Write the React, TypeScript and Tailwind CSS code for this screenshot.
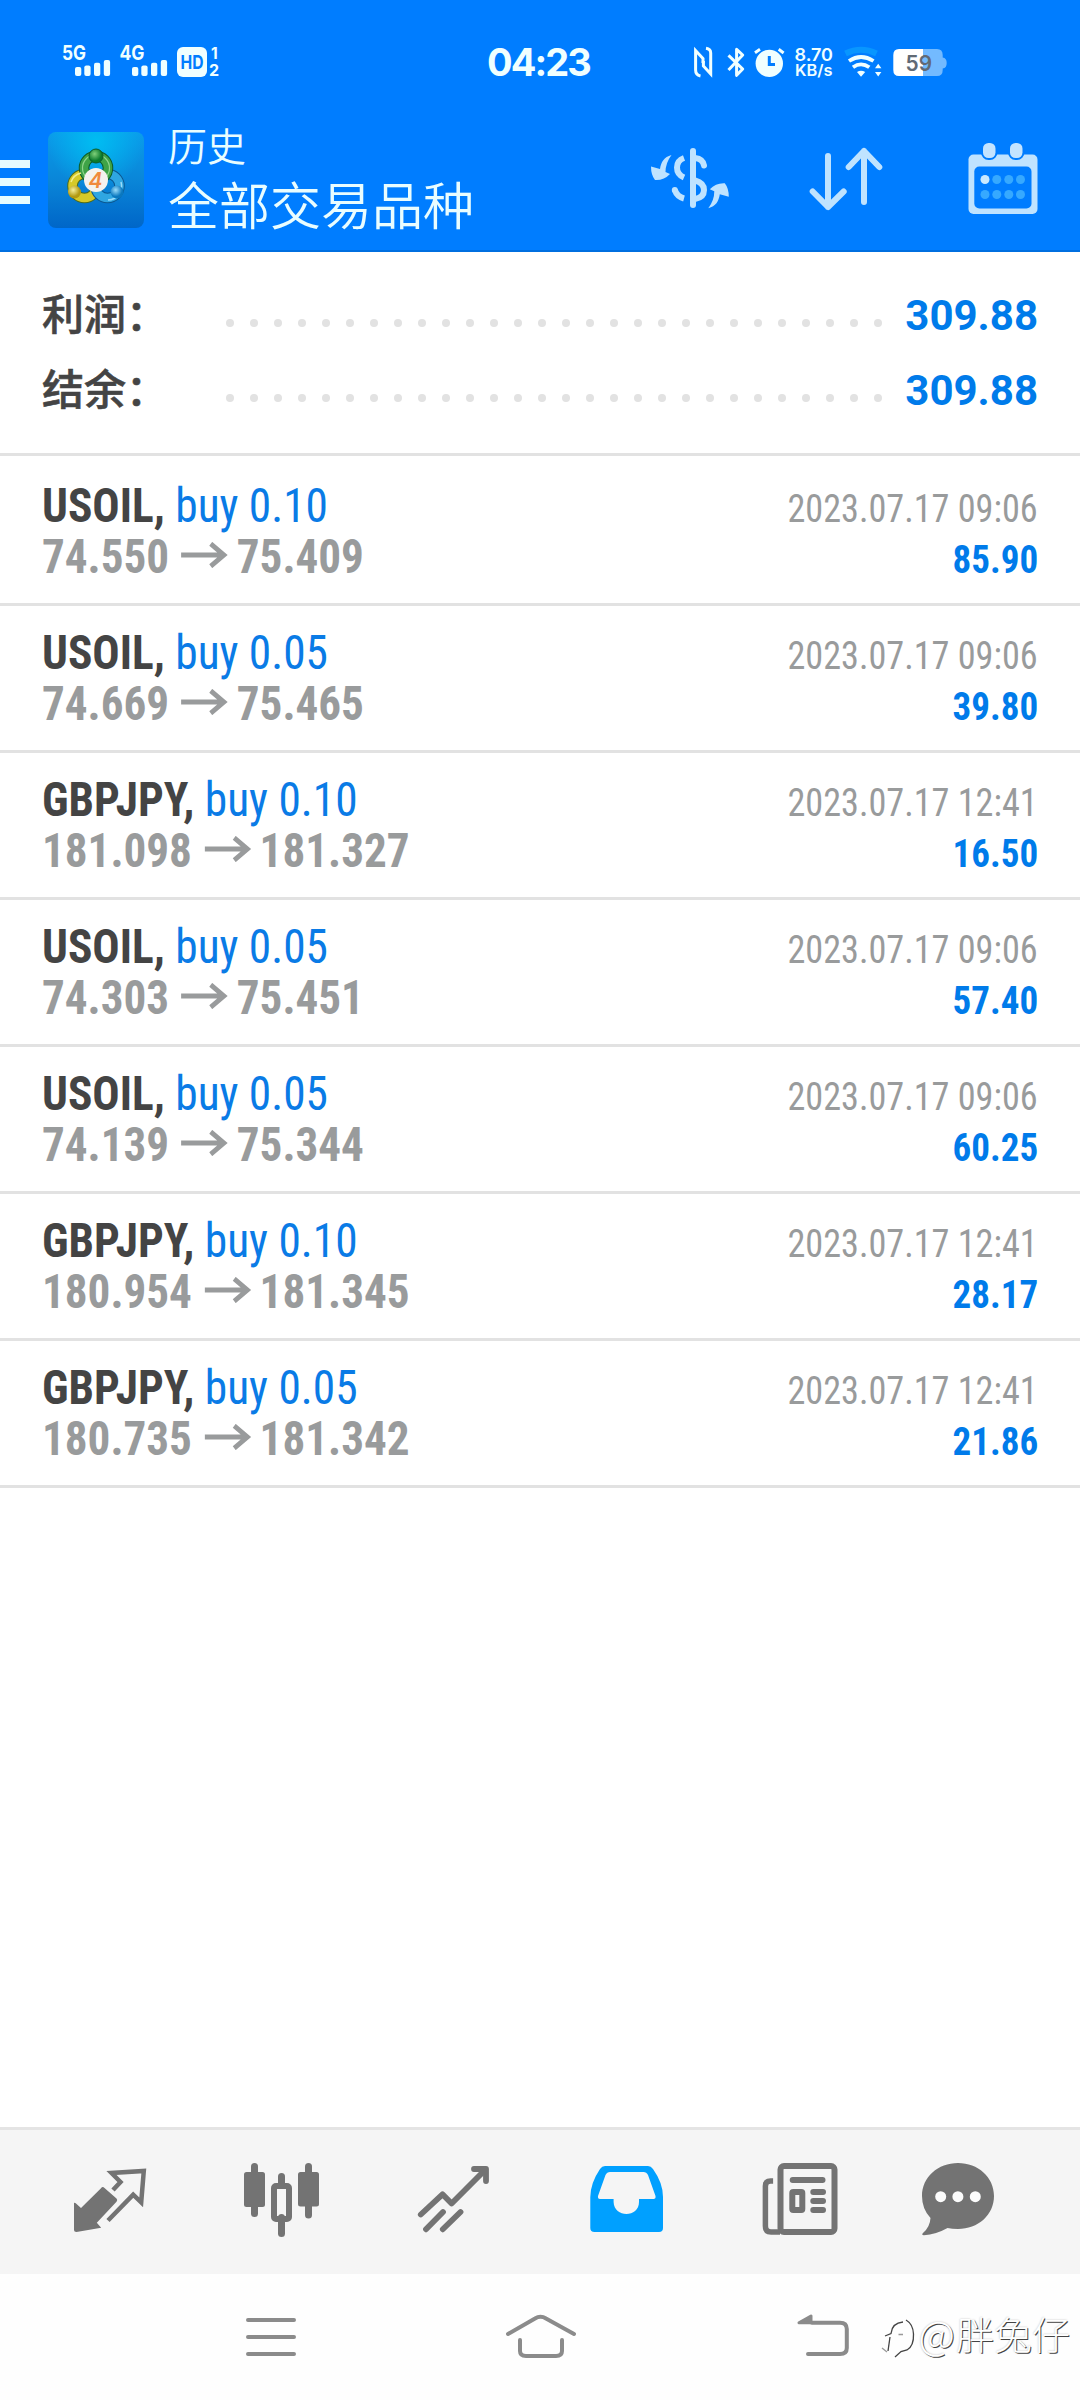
import type { ReactNode } from "react";

type TDeal = {
  symbol: string;
  volume: string;
  open: string;
  close: string;
  time: string;
  profit: string;
};

const deals: TDeal[] = [
  { symbol: "USOIL", volume: "0.10", open: "74.550", close: "75.409", time: "2023.07.17 09:06", profit: "85.90" },
  { symbol: "USOIL", volume: "0.05", open: "74.669", close: "75.465", time: "2023.07.17 09:06", profit: "39.80" },
  { symbol: "GBPJPY", volume: "0.10", open: "181.098", close: "181.327", time: "2023.07.17 12:41", profit: "16.50" },
  { symbol: "USOIL", volume: "0.05", open: "74.303", close: "75.451", time: "2023.07.17 09:06", profit: "57.40" },
  { symbol: "USOIL", volume: "0.05", open: "74.139", close: "75.344", time: "2023.07.17 09:06", profit: "60.25" },
  { symbol: "GBPJPY", volume: "0.10", open: "180.954", close: "181.345", time: "2023.07.17 12:41", profit: "28.17" },
  { symbol: "GBPJPY", volume: "0.05", open: "180.735", close: "181.342", time: "2023.07.17 12:41", profit: "21.86" },
];

const summary = [
  { label: "利润：", value: "309.88" },
  { label: "结余：", value: "309.88" },
];

const SignalIcons = () => (
  <svg width="170" height="44" viewBox="0 0 170 44" fill="#f0ffff" className="font-['Inter'] font-bold">
    <text x="2" y="19.5" fontSize="20" textLength="24" lengthAdjust="spacingAndGlyphs">
      5G
    </text>
    <text x="59.5" y="19.5" fontSize="20" textLength="25" lengthAdjust="spacingAndGlyphs">
      4G
    </text>
    {[15, 72].map((x) => (
      <g key={x}>
        <rect x={x} y="27" width="6.3" height="9" rx="2" />
        <rect x={x + 9.3} y="25.5" width="6.3" height="10.5" rx="2" />
        <rect x={x + 19} y="22.7" width="6.3" height="13.3" rx="2" />
        <rect x={x + 28.8} y="20" width="6.3" height="16" rx="2" />
      </g>
    ))}
    <rect x="117" y="7" width="30" height="30" rx="6" />
    <text x="120.5" y="29" fontSize="19" fill="#007dff" textLength="23" lengthAdjust="spacingAndGlyphs">
      HD
    </text>
    <text x="151" y="18.5" fontSize="15.5">
      1
    </text>
    <text x="149" y="36" fontSize="16">
      2
    </text>
  </svg>
);

const SystemIcons = () => (
  <svg width="260" height="44" viewBox="0 0 260 44" fill="none" className="font-['Inter'] font-semibold">
    <g stroke="#f0ffff" strokeWidth="3">
      <path d="M10.5 36 Q5.6 35 5.6 30 V10.5 L13 18.5 V23" />
      <path d="M16 8.3 Q20.7 9 20.7 13 V34 L13.4 26 V21" />
      <path d="M38.5 15.3 L52.7 29 L46.6 35.3 V9.3 L52.7 15 L38.5 30" strokeLinejoin="round" />
      <path d="M65 12.7 L70 9.3 M88.7 9.3 L93.6 13" />
    </g>
    <circle cx="79.3" cy="23.4" r="13.7" fill="#f0ffff" />
    <path d="M79.3 16 V24.5 H85" stroke="#007dff" strokeWidth="3" />
    <g fill="#f0ffff">
      <text x="104.5" y="20.7" fontSize="17.5" textLength="38.5" lengthAdjust="spacingAndGlyphs">
        8.70
      </text>
      <text x="105" y="36.3" fontSize="15.5" textLength="37.5" lengthAdjust="spacingAndGlyphs">
        KB/s
      </text>
      <path d="M167 32 Q171 29.5 175.2 32 L171 36.8 Z" />
      <path d="M185 28.3 L188.2 23.8 L191.4 28.3 Z M185 32 L188.2 36.5 L191.4 32 Z" />
    </g>
    <path d="M155.5 13.5 Q171 6 186.5 13.5" stroke="#0896ff" strokeWidth="6" />
    <path d="M159 21 Q171 13 183.5 21 M163 27.3 Q171 21.5 179.3 27.3" stroke="#f0ffff" strokeWidth="3.8" />
    <path d="M233 9 H247 Q252.7 9 252.7 15 V17.5 Q256.7 18 256.7 23 Q256.7 28 252.7 28.5 V30 Q252.7 36 247 36 H233 Z" fill="#73baff" />
    <path d="M233 9 H209 Q203.3 9 203.3 15 V30 Q203.3 36 209 36 H233 Z" fill="#fff" />
    <text x="215.5" y="30.7" fontSize="21.5" fill="#616a75" textLength="26.5" lengthAdjust="spacingAndGlyphs">
      59
    </text>
  </svg>
);

const Logo = () => (
  <svg width="96" height="96" viewBox="0 0 96 96">
    <defs>
      <linearGradient id="tile" x1="0" y1="0" x2="0" y2="1">
        <stop offset="0" stopColor="#0a9cea" />
        <stop offset="0.5" stopColor="#0a86d8" />
        <stop offset="1" stopColor="#0066c8" />
      </linearGradient>
      <radialGradient id="glow" cx="0.5" cy="0.1" r="0.5">
        <stop offset="0" stopColor="#00bdf2" />
        <stop offset="1" stopColor="#00bdf2" stopOpacity="0" />
      </radialGradient>
      <radialGradient id="greenBall" cx="0.4" cy="0.35">
        <stop offset="0" stopColor="#7fd07a" />
        <stop offset="1" stopColor="#0b7a2c" />
      </radialGradient>
      <radialGradient id="yellowBall" cx="0.4" cy="0.35">
        <stop offset="0" stopColor="#f5ee9a" />
        <stop offset="1" stopColor="#b39a12" />
      </radialGradient>
      <radialGradient id="blueBall" cx="0.4" cy="0.35">
        <stop offset="0" stopColor="#9adcfa" />
        <stop offset="1" stopColor="#0a78bf" />
      </radialGradient>
    </defs>
    <rect width="96" height="96" rx="8" fill="url(#tile)" />
    <rect width="96" height="96" rx="8" fill="url(#glow)" />
    <g fill="none">
      <circle cx="36.5" cy="54" r="12" stroke="#4d6b1c" strokeWidth="10.5" />
      <circle cx="36.5" cy="54" r="12" stroke="#d6c928" strokeWidth="8.5" />
      <circle cx="59.5" cy="54" r="12" stroke="#0b5790" strokeWidth="10.5" />
      <circle cx="59.5" cy="54" r="12" stroke="#2fa6e2" strokeWidth="8.5" />
      <circle cx="48" cy="36" r="12" stroke="#0d5c2a" strokeWidth="10.5" />
      <circle cx="48" cy="36" r="12" stroke="#3fa347" strokeWidth="8.5" />
      <circle cx="48" cy="36" r="13.5" stroke="#8fd48c" strokeWidth="1.2" />
      <path d="M23 50 A14 14 0 0 1 33 41" stroke="#f4ee8a" strokeWidth="1.5" />
      <path d="M73 50 A14 14 0 0 1 60 68" stroke="#9adcfa" strokeWidth="1.5" />
    </g>
    <circle cx="48" cy="24" r="7" fill="url(#greenBall)" stroke="#0d5c2a" />
    <circle cx="26.5" cy="60" r="6.5" fill="url(#yellowBall)" />
    <circle cx="69" cy="60" r="6.5" fill="url(#blueBall)" />
    <circle cx="48" cy="48" r="12" fill="#f4f2ee" />
    <text x="47.5" y="55.5" fontSize="21" textAnchor="middle" fill="#f08a3c" className="font-['Inter'] font-semibold italic">
      4
    </text>
  </svg>
);

const CurrencyIcon = () => (
  <svg width="120" height="100" viewBox="0 0 120 100" fill="none" stroke="#bfe3ff" strokeWidth="6">
    <path d="M63 21 V75" strokeLinecap="round" />
    <path d="M65 28 Q73 29 74 35.5" strokeLinecap="round" />
    <path d="M54 28 Q47 30.5 47 37.5 Q47 44.5 54 47.5" />
    <path d="M65 50.5 Q74 53 74 60 Q74 67.5 65 69" />
    <path d="M44.8 60 Q47 66.5 54 68.5" />
    <circle cx="44.8" cy="60" r="3" fill="#bfe3ff" stroke="none" />
    <g fill="#bfe3ff" stroke="none">
      <path d="M41.5 25 C34 27 31 32 30 39 L21 36.5 Q21 45 25 50 Q34 50.5 40 44 L35.5 42 Q35.5 33 41.5 25 Z" />
      <path
        d="M41.5 25 C34 27 31 32 30 39 L21 36.5 Q21 45 25 50 Q34 50.5 40 44 L35.5 42 Q35.5 33 41.5 25 Z"
        transform="rotate(180 59.9 51.6)"
      />
    </g>
  </svg>
);

const SortIcon = () => (
  <svg
    width="76"
    height="68"
    viewBox="0 0 76 68"
    fill="none"
    stroke="#bfe3ff"
    strokeWidth="6"
    strokeLinecap="round"
    strokeLinejoin="round"
  >
    <path d="M20 10 V61 M4.7 45.5 L20 61 L35.7 45.5" />
    <path d="M56 56 V5 M40.7 21 L56 5 L71.3 21" />
  </svg>
);

const CalendarIcon = () => (
  <svg width="70" height="72" viewBox="0 0 70 72">
    <rect x="0.5" y="11.5" width="69" height="59.5" rx="5" fill="#bfe3ff" />
    <rect x="6.3" y="23.5" width="57.2" height="42" rx="5" fill="#007dff" />
    {[15, 42].map((x) => (
      <rect key={x} x={x} y="0" width="12.5" height="15" rx="5.5" fill="#c4e4ff" stroke="#007dff" strokeWidth="4" paintOrder="stroke" />
    ))}
    {[36.5, 51.5].map((y, row) =>
      [17, 28.8, 40.8, 52.5].map((x, col) => (
        <circle key={`${x}-${y}`} cx={x} cy={y} r="4.5" fill={row + col === 0 ? "#c9e9ff" : "#36a9ff"} />
      ))
    )}
  </svg>
);

const DealRow = ({ deal }: { deal: TDeal }) => (
  <li className="h-[147px] border-b-[3px] border-[#e2e2e2] px-[42px] pt-[21px] font-['Roboto_Condensed',sans-serif] leading-[51px]">
    <div className="flex h-[51px] items-baseline justify-between">
      <h2 className="origin-left scale-x-[0.945] text-[48px] whitespace-pre text-[#0a7be6]">
        <span className="font-bold text-[#444]">{deal.symbol}, </span>
        buy {deal.volume}
      </h2>
      <span className="origin-right scale-x-[0.928] text-[39px] text-[#999b9c]">{deal.time}</span>
    </div>
    <div className="flex h-[51px] items-baseline justify-between">
      <p className="origin-left scale-x-[0.94] text-[48px] font-bold text-[#999b9c]">
        {deal.open}
        <svg
          width="50"
          height="26"
          viewBox="0 0 50 26"
          fill="none"
          stroke="currentColor"
          strokeWidth="5"
          className="mr-[9px] mb-[5px] ml-[13px] inline align-baseline"
        >
          <path d="M0 13 H46 M31.5 1.8 L45.5 13 L31.5 24.2" />
        </svg>
        {deal.close}
      </p>
      <span className="origin-right scale-x-[0.95] text-[39px] font-bold text-[#007bea]">{deal.profit}</span>
    </div>
  </li>
);

const TabIcon = ({ children }: { children: ReactNode }) => (
  <button className="flex w-[172px] items-center justify-center">
    <svg width="96" height="96" viewBox="0 0 96 96" fill="none">
      {children}
    </svg>
  </button>
);

const TabBar = () => (
  <nav className="flex h-[147px] border-t-[3px] border-[#e4e4e4] bg-[#f5f5f5] pl-6 text-[#737373]">
    <TabIcon>
      <path
        d="M12 49 Q13 48.5 14 49.5 L19 54 L39 34.2 Q40.6 32 42.5 34 L54.5 44.5 Q56 46 54.5 47.8 L34.8 68.7 L39.2 73.7 L14.5 78 Q12 78 12 75.5 Z"
        fill="currentColor"
      />
      <path d="M51 36 L58.5 28 L49.5 19 L81.8 17 L79.2 48.3 L71.2 40.7 L46 66.5" stroke="currentColor" strokeWidth="4.5" />
    </TabIcon>
    <TabIcon>
      <g fill="currentColor">
        <rect x="10" y="18" width="21" height="35" rx="2.5" />
        <rect x="17" y="9" width="7" height="54" rx="3.5" />
        <rect x="64" y="18" width="21" height="34.5" rx="2.5" />
        <rect x="71" y="9" width="7" height="55.5" rx="3.5" />
        <rect x="44" y="19" width="7" height="14" rx="3.5" />
        <rect x="44" y="60" width="7" height="23" rx="3.5" />
      </g>
      <rect x="40" y="32" width="15" height="33" rx="2" stroke="currentColor" strokeWidth="6" />
    </TabIcon>
    <TabIcon>
      <g stroke="currentColor" strokeWidth="5.8" strokeLinecap="round" strokeLinejoin="round">
        <path d="M14.8 60.5 L36.5 40.3 L45.6 49.5 L79 16" />
        <path d="M68 15 H80 V27" />
        <path d="M20 75.3 L37 58 M36.8 75.3 L54.5 58" />
      </g>
    </TabIcon>
    <TabIcon>
      <path
        fillRule="evenodd"
        fill="#00a0ff"
        d="M27 12 H70 Q73 12 75 15 Q85 29 85 43 V74 Q85 78 81 78 H16.5 Q12.3 78 12.3 74 V43 Q12.5 29 22 15 Q24 12 27 12 Z M32 18 Q29 18 27.5 21 L20 42 Q19.5 45 22 45 H35.6 V48 C36 64 61 64 61 48 V45 H75.5 Q78 45 77.5 42 L70 21 Q68.5 18 65.5 18 Z"
      />
    </TabIcon>
    <TabIcon>
      <g stroke="currentColor">
        <rect x="30.5" y="12" width="54" height="66" rx="3.5" strokeWidth="6" />
        <path d="M23.1 27 H20.5 Q15.4 27 15.4 32 V72 Q15.4 78 21 78 H30" strokeWidth="5.5" />
        <path d="M42.7 26 H72.5 M63.3 38 H73 M63.3 47 H73 M63.3 56 H73" strokeWidth="6" strokeLinecap="round" />
        <rect x="42.3" y="38" width="10" height="18" rx="1" strokeWidth="6" />
      </g>
    </TabIcon>
    <TabIcon>
      <g transform="translate(-12)" fill="currentColor">
        <path d="M48 9 C68 9 84 23 84 42 C84 61 68 75 48 75 Q42 75 37.5 74 Q26 80.5 14 81.3 Q11 81 13 79 Q20 73 20.5 64 Q12 55 12 42 C12 23 28 9 48 9 Z" />
        <g fill="#fcfcfc">
          <circle cx="30.7" cy="42.7" r="5.5" />
          <circle cx="47.9" cy="42.7" r="5.5" />
          <circle cx="65.3" cy="42.7" r="5.5" />
        </g>
      </g>
    </TabIcon>
  </nav>
);

const Watermark = () => (
  <div className="absolute top-[34px] right-[10px] flex items-center font-['Noto_Sans_CJK_SC',sans-serif] text-[38px] leading-[50px] font-light text-white [text-shadow:1px_1px_0_#444,0_0_2px_#bbb]">
    <svg width="39" height="50" viewBox="0 0 39 50" fill="none" stroke="#444" strokeWidth="1.3">
      <path d="M26 12 Q33 16 33.5 26 Q34 38 27 42 L21 43.5 L15 49" />
      <path d="M5 28 L11 25.5 Q12 15 23 14" />
      <path d="M10 29 L8 43" />
      <path d="M2 40 L7 44 M18.5 26.5 H23" stroke="#999" />
    </svg>
    <span className="mr-[1px] text-[40px]">@</span>胖兔仔
  </div>
);

export default function App() {
  return (
    <div className="flex h-[2400px] w-[1080px] flex-col overflow-hidden bg-white">
      <header className="h-[252px] border-b-2 border-[#006fe0] bg-[#007dff] pt-10">
        <div className="flex h-[44px] items-center pl-[60px]">
          <SignalIcons />
          <span className="ml-[257px] w-[203px] font-['Inter'] text-[38px] leading-[44px] font-bold tracking-[-1.9px] text-[#f0ffff]">
            04:23
          </span>
          <SystemIcons />
        </div>
        <div className="flex pt-[36px]">
          <button className="mt-[40px] flex h-[44px] w-[30px] flex-col justify-between">
            <span className="h-[8px] w-full bg-[#e6fcff]" />
            <span className="h-[8px] w-full bg-[#e6fcff]" />
            <span className="h-[8px] w-full bg-[#e6fcff]" />
          </button>
          <div className="mt-[12px] ml-[18px]">
            <Logo />
          </div>
          <div className="-mt-[3px] ml-[24px] font-['Noto_Sans_CJK_SC',sans-serif] font-[350] text-[#e9fdff]">
            <p className="text-[39px] leading-[54px]">历史</p>
            <h1 className="text-[51px] leading-[64px]">全部交易品种</h1>
          </div>
          <div className="ml-auto flex items-start pr-[42px]">
            <button className="mt-[10px] mr-[58px]">
              <CurrencyIcon />
            </button>
            <button className="mt-[26px] mr-[84px]">
              <SortIcon />
            </button>
            <button className="mt-[23px]">
              <CalendarIcon />
            </button>
          </div>
        </div>
      </header>

      <section className="flex h-[204px] flex-col border-b-[3px] border-[#e2e2e2] px-[42px] pt-[26px]">
        {summary.map((item) => (
          <div key={item.label} className="flex h-[75px] items-center">
            <span className="-mt-[7px] w-[184px] font-['Noto_Sans_CJK_SC',sans-serif] text-[42px] leading-[60px] font-medium text-[#444] [-webkit-text-stroke:0.6px_#444]">
              {item.label}
            </span>
            <div className="mt-[15px] flex w-[656px] justify-between">
              {Array.from({ length: 28 }, (_, i) => (
                <span key={i} className="h-2 w-2 rounded-full bg-[#e2e2e2]" />
              ))}
            </div>
            <span className="ml-auto pt-[1px] font-['Roboto',sans-serif] text-[42px] leading-[60px] font-bold text-[#007bea]">
              {item.value}
            </span>
          </div>
        ))}
      </section>

      <ul className="flex-1 pt-[3px]">
        {deals.map((deal) => (
          <DealRow key={deal.open} deal={deal} />
        ))}
      </ul>

      <TabBar />

      <footer className="relative flex h-[126px] bg-[#fefefe]">
        <svg width="1080" height="126" viewBox="0 0 1080 126" fill="none" stroke="#8b8b8b" strokeWidth="4" strokeLinecap="round">
          <path d="M248 46 H294 M248 63 H294 M248 80 H294" />
          <path d="M508 60 L535 44.5 Q540.5 41 546 44.5 L574 60" />
          <path d="M520 66 V77 Q520 82 526 82 H556 Q562 82 562 77 V66" />
          <path d="M812 48.7 H840 Q846.8 48.7 846.8 55 V74 Q846.8 80 840 80 H808" />
          <path d="M799 48.7 L811 42 V48.7 Z" fill="#8b8b8b" strokeWidth="3" strokeLinejoin="round" />
        </svg>
        <Watermark />
      </footer>
    </div>
  );
}
